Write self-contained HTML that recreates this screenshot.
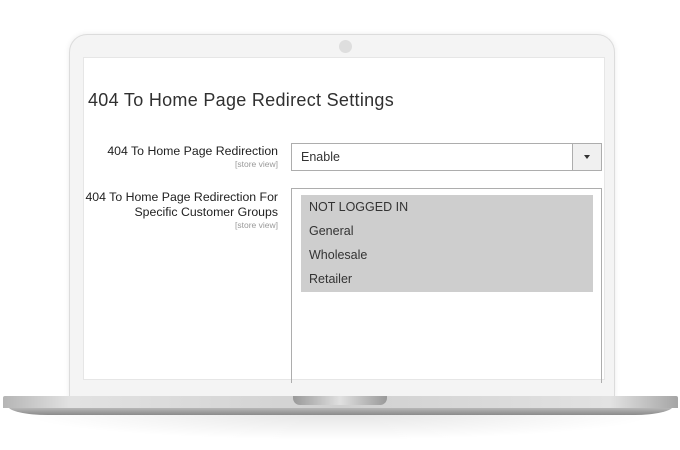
<!DOCTYPE html>
<html><head><meta charset="utf-8"><style>
*{margin:0;padding:0;box-sizing:border-box}
body{width:680px;height:450px;background:#fff;position:relative;overflow:hidden;font-family:"Liberation Sans",sans-serif;color:#303030}
.bezel{position:absolute;left:69px;top:34px;width:546px;height:364px;background:#f4f4f4;border:1px solid #dcdcdc;border-bottom:none;border-radius:18px 18px 0 0;box-shadow:0 0 6px rgba(0,0,0,.08)}
.cam{position:absolute;left:339px;top:40px;width:13px;height:13px;border-radius:50%;background:#dedede}
.screen{position:absolute;left:83px;top:57px;width:522px;height:323px;background:#fff;border:1px solid #e6e6e6}
.base{position:absolute;left:3px;top:396px;width:675px;height:12px;background:linear-gradient(90deg,#b5b5b5,#e2e2e2 10%,#d0d0d0 50%,#e2e2e2 90%,#a5a5a5);border-radius:2px 2px 0 0}
.base2{position:absolute;left:8px;top:406px;width:665px;height:9px;background:linear-gradient(#c4c4c4,#8a8a8a);border-radius:0 0 40px 40px/0 0 9px 9px}
.shadow{position:absolute;left:20px;top:414px;width:640px;height:26px;background:radial-gradient(ellipse at top,rgba(0,0,0,.1),rgba(0,0,0,0) 70%)}
.notch{position:absolute;left:293px;top:396px;width:94px;height:9px;background:linear-gradient(90deg,#999,#e0e0e0 50%,#999);border-radius:0 0 7px 7px}
h1{position:absolute;left:88px;top:90px;font-size:18px;font-weight:normal;color:#303030;letter-spacing:.3px}
.lbl{position:absolute;right:402px;text-align:right;font-size:12.3px;color:#222;line-height:15px}
.lbl small{display:block;font-size:8.5px;color:#999;line-height:10px}
.sel{position:absolute;left:291px;top:143px;width:311px;height:28px;border:1px solid #adadad;font-size:12.5px;padding:6px 9px;color:#333}
.sel .btn{position:absolute;right:0;top:0;width:29px;height:26px;border-left:1px solid #adadad;background:#f0f0f0}
.sel .btn:after{content:"";position:absolute;left:11px;top:11px;border:3.5px solid transparent;border-top:4px solid #333}
.multi{position:absolute;left:291px;top:188px;width:311px;height:195px;border:1px solid #adadad;border-bottom:none}
.opts{position:absolute;left:9px;top:6px;width:292px;height:97px;background:#cecece}
.opts div{height:24px;padding:5px 8px;font-size:12.5px;color:#333}
</style></head><body>
<div class="bezel"></div>
<div class="cam"></div>
<div class="screen"></div>
<h1>404 To Home Page Redirect Settings</h1>
<div class="lbl" style="top:144px">404 To Home Page Redirection<small>[store view]</small></div>
<div class="lbl" style="top:190px">404 To Home Page Redirection For<br>Specific Customer Groups<small>[store view]</small></div>
<div class="sel">Enable<div class="btn"></div></div>
<div class="multi"><div class="opts"><div>NOT LOGGED IN</div><div>General</div><div>Wholesale</div><div>Retailer</div></div></div>
<div class="shadow"></div>
<div class="base2"></div>
<div class="base"></div>
<div class="notch"></div>
</body></html>
